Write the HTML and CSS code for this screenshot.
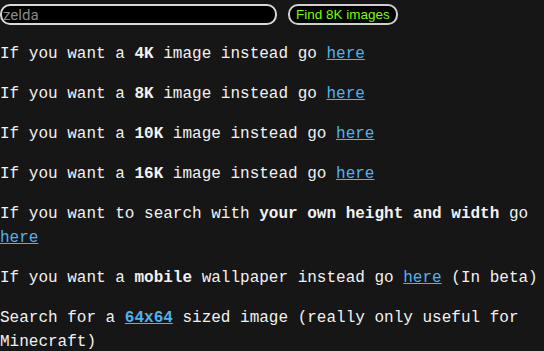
FILE: index.html
```html
<!DOCTYPE html>
<html>
<head>
<meta charset="utf-8">
<link rel="stylesheet" href="styles.css">
</head>
<body>
<form class="search">
  <input class="search-input" type="text" value="zelda">
  <button class="search-btn" type="button">Find 8K images</button>
</form>
<p>If you want a <b>4K</b> image instead go <a href="#">here</a></p>
<p>If you want a <b>8K</b> image instead go <a href="#">here</a></p>
<p>If you want a <b>10K</b> image instead go <a href="#">here</a></p>
<p>If you want a <b>16K</b> image instead go <a href="#">here</a></p>
<p>If you want to search with <b>your own height and width</b> go <a href="#">here</a></p>
<p>If you want a <b>mobile</b> wallpaper instead go <a href="#">here</a> (In beta)</p>
<p>Search for a <a href="#"><b>64x64</b></a> sized image (really only useful for Minecraft)</p>
</body>
</html>
```
FILE: styles.css
```css
html, body {
  background: #161616;
}
body {
  margin: 0;
  padding-top: 3px;
  color: #f2f2f2;
  font-family: "Liberation Mono", "DejaVu Sans Mono", monospace;
  font-size: 16px;
  line-height: 24px;
}
.search {
  display: flex;
  align-items: center;
  gap: 11px;
  height: 23px;
  margin: 0;
}
.search-input {
  box-sizing: border-box;
  width: 277px;
  height: 21px;
  margin: 0;
  padding: 0 1px;
  background: #000;
  color: #8a8a8a;
  border: 2px solid #d8d8d8;
  border-radius: 10px;
  font-family: Roboto, "Liberation Sans", sans-serif;
  font-size: 15px;
  outline: none;
}
.search-btn {
  box-sizing: border-box;
  height: 21px;
  margin: 0;
  padding: 0 6px;
  background: #000;
  color: #7cfc00;
  border: 2px solid #cfcfcf;
  border-radius: 10px;
  font-family: "Liberation Sans", Arial, sans-serif;
  font-size: 13.5px;
}
p {
  margin: 16px 0;
}
b {
  font-weight: bold;
}
a {
  color: #4fb3f0;
  text-decoration: underline;
}
```
